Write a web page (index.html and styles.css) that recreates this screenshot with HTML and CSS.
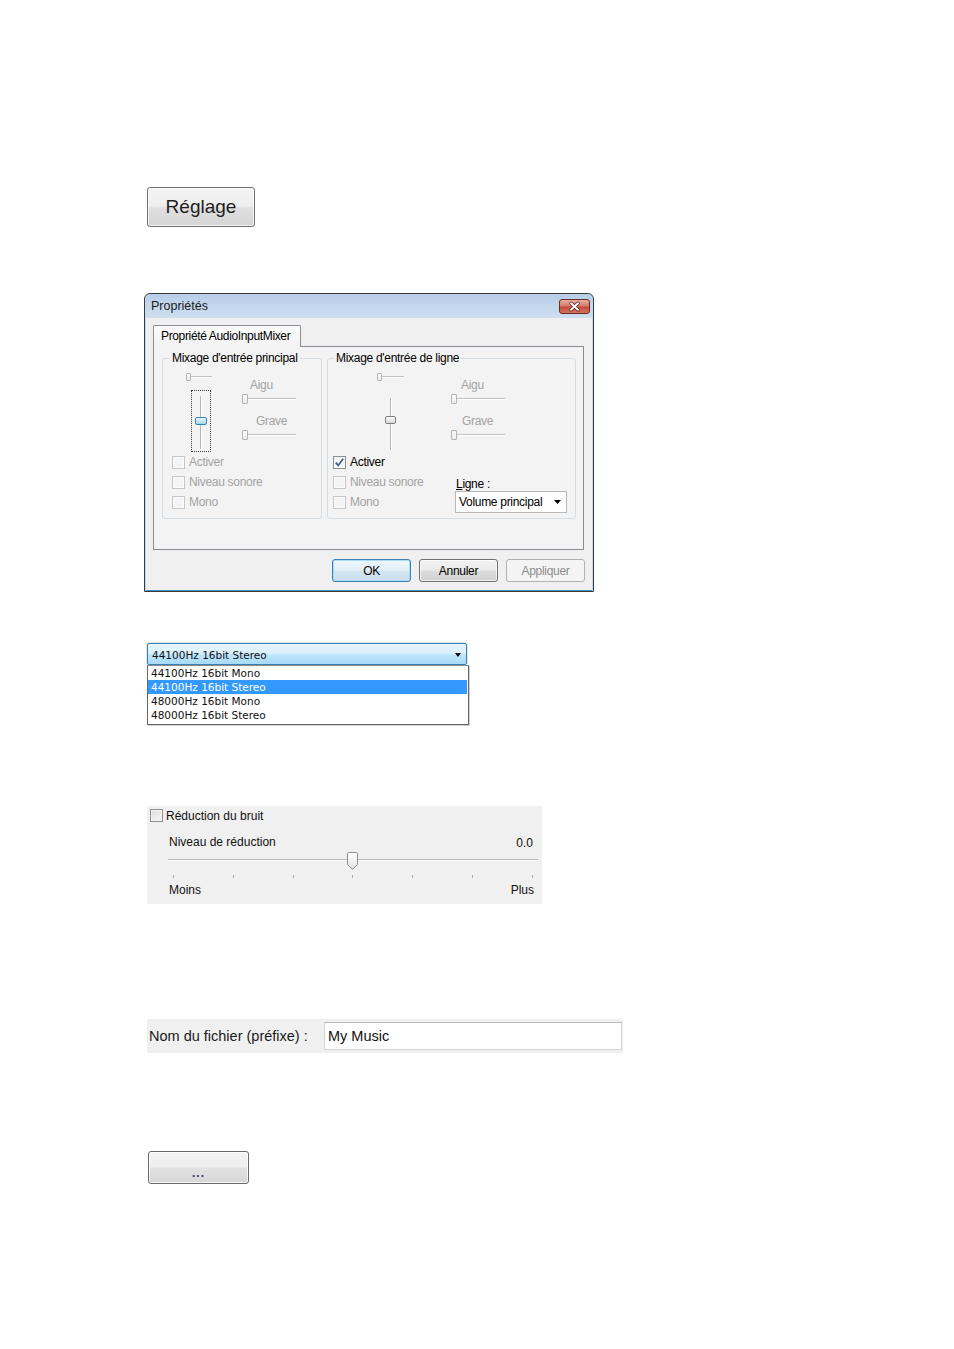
FILE: index.html
```html
<!DOCTYPE html>
<html lang="fr">
<head>
<meta charset="utf-8">
<title>Réglages audio</title>
<link rel="stylesheet" href="styles.css">
</head>
<body>
<main class="page">
  <button class="btn-big" type="button">Réglage</button>

  <section class="dialog">
    <header class="titlebar">
      <span class="title">Propriétés</span>
      <span class="close">
        <svg width="31" height="15" viewBox="0 0 31 15">
          <defs>
            <linearGradient id="cg" x1="0" y1="0" x2="0" y2="1">
              <stop offset="0" stop-color="#eab1a6"/>
              <stop offset="0.48" stop-color="#d5796a"/>
              <stop offset="0.52" stop-color="#c24a3a"/>
              <stop offset="1" stop-color="#d9765f"/>
            </linearGradient>
          </defs>
          <rect x="0.5" y="0.5" width="30" height="14" rx="2.5" fill="url(#cg)" stroke="#6b2b23"/>
          <path d="M12 4.2 L19 10.8 M19 4.2 L12 10.8" stroke="#5b2019" stroke-width="3.4" stroke-linecap="round"/>
          <path d="M12 4.2 L19 10.8 M19 4.2 L12 10.8" stroke="#ffffff" stroke-width="1.9" stroke-linecap="round"/>
        </svg>
      </span>
    </header>
    <div class="dlg-body">
      <div class="tabs"><div class="tab">Propriété AudioInputMixer</div></div>
      <div class="tabpanel">
        <fieldset class="group group-main">
          <legend>Mixage d'entrée principal</legend>
          <div class="mixer">
            <div class="col-a col-a-main">
              <div class="hs small"><span class="hthumb"></span><span class="htrack"></span></div>
              <div class="vs vs-main">
                <span class="vseg seg-top"></span><span class="vthumb blue"></span><span class="vseg seg-bot"></span>
              </div>
            </div>
            <div class="col-b col-b-main">
              <div class="lbl dis lbl-aigu">Aigu</div>
              <div class="hs"><span class="hthumb"></span><span class="htrack"></span></div>
              <div class="lbl dis lbl-grave">Grave</div>
              <div class="hs"><span class="hthumb"></span><span class="htrack"></span></div>
            </div>
          </div>
          <div class="checks checks-main">
            <div class="chk dis"><span class="box"></span>Activer</div>
            <div class="chk dis"><span class="box"></span>Niveau sonore</div>
            <div class="chk dis"><span class="box"></span>Mono</div>
          </div>
        </fieldset>

        <fieldset class="group group-line">
          <legend>Mixage d'entrée de ligne</legend>
          <div class="mixer">
            <div class="col-a col-a-line">
              <div class="hs small"><span class="hthumb"></span><span class="htrack"></span></div>
              <div class="vs vs-line">
                <span class="vseg seg-top"></span><span class="vthumb"></span><span class="vseg seg-bot"></span>
              </div>
            </div>
            <div class="col-b col-b-line">
              <div class="lbl dis lbl-aigu">Aigu</div>
              <div class="hs"><span class="hthumb"></span><span class="htrack"></span></div>
              <div class="lbl dis lbl-grave">Grave</div>
              <div class="hs"><span class="hthumb"></span><span class="htrack"></span></div>
            </div>
          </div>
          <div class="checks checks-line">
            <div class="check-col">
              <div class="chk"><span class="box checked">
                <svg width="11" height="11" viewBox="0 0 11 11"><path d="M1.8 5.6 L4.2 8.4 L9.2 1.8" fill="none" stroke="#3d5a8c" stroke-width="1.7"/></svg>
              </span>Activer</div>
              <div class="chk dis"><span class="box"></span>Niveau sonore</div>
              <div class="chk dis"><span class="box"></span>Mono</div>
            </div>
            <div class="ligne">
              <div class="ligne-lbl"><u>L</u>igne :</div>
              <div class="ligne-combo">
                <span>Volume principal</span>
                <svg width="7" height="4" viewBox="0 0 7 4"><polygon points="0,0 7,0 3.5,4" fill="#000"/></svg>
              </div>
            </div>
          </div>
        </fieldset>
      </div>
      <div class="dlg-buttons">
        <button class="btn btn-default" type="button">OK</button>
        <button class="btn" type="button">Annuler</button>
        <button class="btn btn-disabled" type="button">Appliquer</button>
      </div>
    </div>
  </section>

  <div class="combo-block">
    <div class="combo-sel">
      <span>44100Hz 16bit Stereo</span>
      <svg width="6" height="4" viewBox="0 0 6 4"><polygon points="0,0 6,0 3,4" fill="#000"/></svg>
    </div>
    <ul class="list">
      <li>44100Hz 16bit Mono</li>
      <li class="sel">44100Hz 16bit Stereo</li>
      <li>48000Hz 16bit Mono</li>
      <li>48000Hz 16bit Stereo</li>
    </ul>
  </div>

  <section class="noise">
    <div class="nr-head"><span class="box nr-box"></span>Réduction du bruit</div>
    <div class="nr-level"><span>Niveau de réduction</span><span class="nr-val">0.0</span></div>
    <div class="nr-slider">
      <svg class="nr-thumb" width="11" height="18" viewBox="0 0 11 18">
        <defs>
          <linearGradient id="tg" x1="0" y1="0" x2="0" y2="1">
            <stop offset="0" stop-color="#ffffff"/>
            <stop offset="1" stop-color="#e2e2e2"/>
          </linearGradient>
        </defs>
        <path d="M0.5 1.5 Q0.5 0.5 1.5 0.5 H9.5 Q10.5 0.5 10.5 1.5 V12.5 L5.5 17.3 L0.5 12.5 Z" fill="url(#tg)" stroke="#8c8c8c"/>
      </svg>
    </div>
    <div class="nr-ticks">
      <span></span><span></span><span></span><span></span><span></span><span></span><span></span>
    </div>
    <div class="nr-labels"><span>Moins</span><span>Plus</span></div>
  </section>

  <section class="fname">
    <span class="fname-lbl">Nom du fichier (préfixe) :</span>
    <input class="fname-input" type="text" value="My Music">
  </section>

  <button class="btn-dots" type="button">...</button>
</main>
</body>
</html>
```

FILE: styles.css
```css
* { box-sizing: border-box; }

body {
  margin: 0;
  background: #ffffff;
  font-family: "Liberation Sans", Arial, sans-serif;
  color: #000;
}

.page {
  display: flex;
  flex-direction: column;
  align-items: flex-start;
  padding-top: 187px;
}

/* ---------- Réglage button ---------- */
.btn-big {
  margin-left: 147px;
  width: 108px;
  height: 40px;
  padding: 0;
  border: 1px solid #707070;
  border-radius: 3px;
  background: linear-gradient(#f4f4f4 0%, #eeeeee 48%, #e0e0e0 52%, #d4d4d4 100%);
  box-shadow: inset 0 0 0 1px rgba(255, 255, 255, 0.75);
  font-family: "Liberation Sans", Arial, sans-serif;
  font-size: 19px;
  color: #1e1e1e;
}

/* ---------- Dialog ---------- */
.dialog {
  margin-top: 66px;
  margin-left: 144px;
  width: 450px;
  height: 299px;
  border: 1px solid #3a3a3a;
  border-radius: 6px 6px 0 0;
  background: #c5d9ee;
  padding: 0 1px;
  display: flex;
  flex-direction: column;
  font-size: 12px;
  letter-spacing: -0.3px;
}

.titlebar {
  height: 24px;
  flex: none;
  display: flex;
  justify-content: space-between;
  align-items: flex-start;
  padding: 0 2px 0 5px;
  background: linear-gradient(#b7cee8, #cfdff0);
  border-radius: 5px 5px 0 0;
}

.title {
  font-size: 12.5px;
  letter-spacing: 0;
  line-height: 25px;
  color: #1a1a1a;
}

.close {
  margin-top: 5px;
  display: flex;
}

.dlg-body {
  height: 273px;
  flex: none;
  background: #f0f0f0;
  border-bottom: 1px solid #3d93ba;
  padding: 7px 7px 0 7px;
  display: flex;
  flex-direction: column;
}

.tabs {
  display: flex;
  height: 22px;
  margin-bottom: -1px;
  position: relative;
  z-index: 1;
}

.tab {
  width: 148px;
  height: 22px;
  padding-left: 7px;
  border: 1px solid #898c95;
  border-bottom: none;
  border-radius: 2px 2px 0 0;
  background: linear-gradient(#fbfbfb, #f3f3f3);
  line-height: 21px;
  white-space: nowrap;
  letter-spacing: -0.35px;
}

.tabpanel {
  width: 431px;
  height: 204px;
  border: 1px solid #898c95;
  background: #f3f3f3;
  padding: 4px 7px 0 8px;
  display: flex;
  align-items: flex-start;
  gap: 5px;
}

.group {
  margin: 0;
  padding: 0;
  min-width: 0;
  height: 168px;
  border: 1px solid #d5dce2;
  border-radius: 3px;
}

.group-main { width: 160px; }
.group-line { width: 249px; }

.group legend {
  padding: 0 2px;
  line-height: 15px;
  white-space: nowrap;
}
.group-main legend { margin-left: 7px; }
.group-line legend { margin-left: 6px; }

.mixer {
  display: flex;
  height: 86px;
}

.col-a { display: flex; flex-direction: column; }
.col-a-main { margin-left: 23px; width: 26px; }
.col-a-line { margin-left: 49px; width: 27px; }

.col-b { width: 54px; display: flex; flex-direction: column; }
.col-b-main { margin-left: 30px; }
.col-b-line { margin-left: 47px; }

/* horizontal slider */
.hs {
  display: flex;
  align-items: center;
  height: 10px;
  margin-top: 2px;
}
.hs.small { height: 8px; margin-top: 7px; }

.hthumb {
  width: 6px;
  height: 10px;
  border: 1px solid #b4b4b4;
  border-radius: 1px;
  background: linear-gradient(#fbfbfb, #ececec);
  flex: none;
}
.hs.small .hthumb { width: 5px; height: 8px; }

.htrack {
  flex: 1;
  height: 2px;
  border-top: 1px solid #c2c2c2;
  border-bottom: 1px solid #ffffff;
}

/* vertical slider */
.vs {
  display: flex;
  flex-direction: column;
  align-items: center;
}
.vseg {
  width: 2px;
  border-left: 1px solid #b5b5b5;
  border-right: 1px solid #ffffff;
}
.vthumb {
  width: 11px;
  height: 8px;
  border: 1px solid #7f7f7f;
  border-radius: 2px;
  background: linear-gradient(#fafafa, #d9d9d9);
  flex: none;
}
.vthumb.blue {
  width: 12px;
  border-color: #3c7fb1;
  background: linear-gradient(#eaf6fd, #a3d5f2);
}

.vs-main {
  margin-top: 9px;
  margin-left: 5px;
  width: 20px;
  height: 63px;
  border: 1px dotted #404040;
  padding-top: 5px;
}
.vs-main .seg-top { height: 21px; }
.vs-main .seg-bot { height: 24px; }

.vs-line {
  margin-top: 17px;
  margin-left: 8px;
  width: 11px;
}
.vs-line .seg-top { height: 18px; }
.vs-line .seg-bot { height: 26px; }

.lbl { line-height: 13px; }
.lbl-aigu { margin-top: 13px; }
.lbl-grave { margin-top: 11px; }
.col-b-main .lbl-aigu { padding-left: 8px; }
.col-b-main .lbl-grave { padding-left: 14px; }
.col-b-line .lbl-aigu { padding-left: 10px; }
.col-b-line .lbl-grave { padding-left: 11px; }

.dis { color: #a3a3a3; }

/* checkboxes */
.checks-main { padding-left: 9px; }
.checks-line { padding-left: 5px; display: flex; }
.check-col { width: 122px; }

.chk {
  display: flex;
  align-items: center;
  gap: 4px;
  height: 20px;
  white-space: nowrap;
}

.box {
  width: 13px;
  height: 13px;
  flex: none;
  border: 1px solid #c6c6c6;
  background: #f4f4f4;
  box-shadow: inset 0 0 0 1px #fbfbfb;
  display: flex;
  align-items: center;
  justify-content: center;
}
.box.checked {
  border-color: #8e8f8f;
  background: linear-gradient(#f0f0f0, #ffffff);
  box-shadow: none;
}

.ligne {
  margin-top: 25px;
  width: 112px;
}
.ligne-lbl {
  line-height: 14px;
  padding-left: 1px;
}
.ligne-combo {
  height: 22px;
  border: 1px solid #b8b8b8;
  background: #ffffff;
  display: flex;
  align-items: center;
  justify-content: space-between;
  padding: 0 5px 0 3px;
  white-space: nowrap;
}

/* dialog buttons */
.dlg-buttons {
  display: flex;
  justify-content: flex-end;
  gap: 8px;
  margin-top: 9px;
}

.btn {
  width: 79px;
  height: 23px;
  padding: 0;
  border: 1px solid #707070;
  border-radius: 3px;
  background: linear-gradient(#f2f2f2 0%, #ebebeb 48%, #dddddd 52%, #cfcfcf 100%);
  box-shadow: inset 0 0 0 1px rgba(255, 255, 255, 0.7);
  font-family: "Liberation Sans", Arial, sans-serif;
  font-size: 12px;
  letter-spacing: -0.3px;
  color: #000;
}
.btn-default {
  border-color: #3c7fb1;
  background: linear-gradient(#eef6fb 0%, #e3eff7 48%, #d5e6f1 52%, #c8dded 100%);
  box-shadow: inset 0 0 0 1px #a9dcf5;
}
.btn-disabled {
  border-color: #adb2b5;
  background: #f4f4f4;
  box-shadow: none;
  color: #8d8d8d;
}

/* ---------- Sample-rate combo ---------- */
.combo-block {
  margin-top: 51px;
  margin-left: 147px;
  width: 322px;
  font-family: "DejaVu Sans", sans-serif;
  font-size: 10.5px;
  color: #111;
}

.combo-sel {
  width: 320px;
  height: 22px;
  border: 1px solid #3c7fb1;
  border-radius: 2px;
  background: linear-gradient(#eaf6fd 0%, #d9f0fc 45%, #bee6fd 55%, #a7d9f5 100%);
  display: flex;
  align-items: center;
  justify-content: space-between;
  padding: 1px 5px 0 4px;
  box-shadow: 0 0 0 1px #e6e6e6;
}

.list {
  list-style: none;
  margin: 0;
  padding: 0 1px 2px 0;
  width: 322px;
  border: 1px solid #666666;
  border-top-color: #8a8a8a;
  background: #ffffff;
  box-shadow: 1px 1px 0 #d0d0d0;
}
.list li {
  height: 14px;
  line-height: 14px;
  padding-left: 3px;
}
.list li.sel {
  background: #3399ff;
  color: #ffffff;
}

/* ---------- Noise reduction ---------- */
.noise {
  margin-top: 81px;
  margin-left: 147px;
  width: 395px;
  height: 98px;
  background: #f0f0f0;
  padding: 3px 0 0 3px;
  font-size: 12px;
  color: #111;
}

.nr-head {
  display: flex;
  align-items: center;
  gap: 3px;
  height: 13px;
}
.nr-box {
  border-color: #8e8f8f;
  background: linear-gradient(135deg, #dcdcdc, #f8f8f8);
  box-shadow: inset 0 0 0 1px #f4f4f4;
}

.nr-level {
  display: flex;
  justify-content: space-between;
  align-items: flex-end;
  margin-top: 11px;
  padding-left: 19px;
  padding-right: 9px;
  line-height: 14px;
  height: 16px;
}
.nr-val { line-height: 12px; }

.nr-slider {
  margin-top: 3px;
  margin-left: 18px;
  width: 370px;
  height: 18px;
  display: flex;
  background: linear-gradient(transparent 7px, #b9b9b9 7px, #b9b9b9 8px, #ffffff 8px, #ffffff 9px, transparent 9px);
}
.nr-thumb {
  margin-left: 179px;
  display: block;
}

.nr-ticks {
  margin-top: 5px;
  margin-left: 23px;
  width: 360px;
  height: 3px;
  display: flex;
  justify-content: space-between;
}
.nr-ticks span {
  width: 1px;
  height: 3px;
  background: #a8a8a8;
}

.nr-labels {
  display: flex;
  justify-content: space-between;
  margin-top: 5px;
  padding-left: 19px;
  padding-right: 8px;
  line-height: 15px;
}

/* ---------- File name ---------- */
.fname {
  margin-top: 115px;
  margin-left: 147px;
  width: 476px;
  height: 34px;
  background: #f0f0f0;
  padding: 3px 1px 3px 2px;
  display: flex;
  align-items: center;
  justify-content: space-between;
}
.fname-lbl {
  font-size: 14.5px;
  color: #1a1a1a;
  white-space: nowrap;
}
.fname-input {
  width: 298px;
  height: 28px;
  margin: 0;
  border: 1px solid #d4d4d4;
  border-top-color: #b9b9b9;
  background: #ffffff;
  padding: 0 3px;
  font-family: "Liberation Sans", Arial, sans-serif;
  font-size: 14.5px;
  color: #111;
  outline: none;
}

/* ---------- "..." button ---------- */
.btn-dots {
  margin-top: 98px;
  margin-left: 148px;
  width: 101px;
  height: 33px;
  padding: 0 0 4px 0;
  border: 1px solid #6a6a6a;
  border-radius: 3px;
  background: linear-gradient(#f4f4f4 0%, #eeeeee 48%, #e2e2e2 52%, #d6d6d6 100%);
  box-shadow: inset 0 0 0 1px rgba(255, 255, 255, 0.8);
  display: flex;
  align-items: flex-end;
  justify-content: center;
  font-family: "Liberation Sans", Arial, sans-serif;
  font-size: 12px;
  font-weight: bold;
  line-height: 12px;
  letter-spacing: 1px;
  color: #3a3a5a;
}
```
